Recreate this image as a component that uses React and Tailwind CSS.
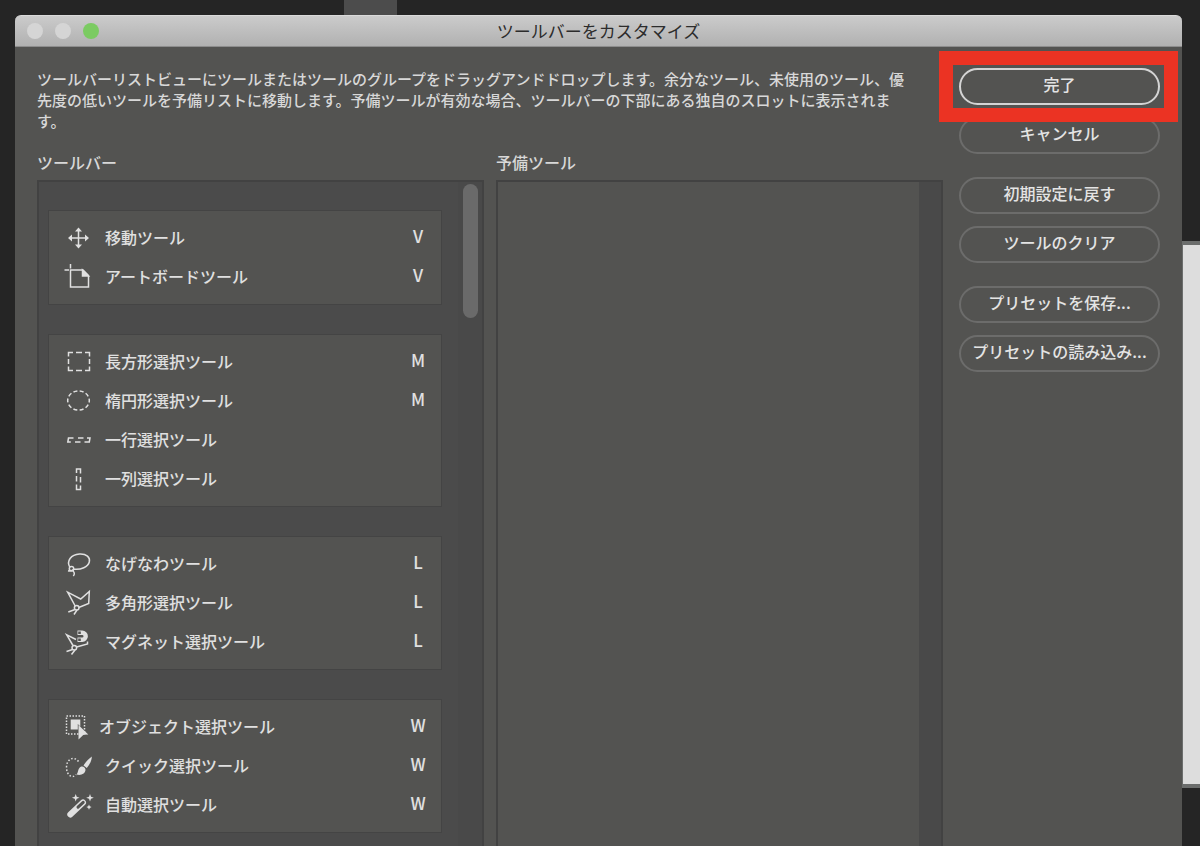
const MoveIcon = () => (
  <g>
    <path d="M13.5 8v16M5.5 16h16" />
    <path
      d="M13.5 5.5l3.5 4h-7zM13.5 26.5l3.5-4h-7zM3 16l4-3.5v7zM24 16l-4-3.5v7z"
      fill="currentColor"
      stroke="none"
    />
  </g>
);

const ArtboardIcon = () => (
  <g>
    <path d="M5.5 3v4.5M-0.5 9H4M5.5 9h12.5l5.5 5.5V26h-18z" />
    <path d="M17.5 9v6h6z" fill="currentColor" />
  </g>
);

const RectMarqueeIcon = () => (
  <path d="M3.5 10.5V6.5H8M11 6.5h6M20 6.5h4.5v4M24.5 13v5M24.5 20.5v4H20M17 24.5h-6M8 24.5H3.5v-4M3.5 18v-5" />
);

const EllipseMarqueeIcon = () => (
  <ellipse cx="13.5" cy="15.5" rx="10.8" ry="9.6" pathLength="120" strokeDasharray="7.5 4.5" strokeDashoffset="3.7" />
);

const RowMarqueeIcon = () => (
  <path d="M8.5 14H3.5L2.8 18h3M13 14h5.5M10 18h5.5M22 14h3L24.3 18H19.5" />
);

const ColumnMarqueeIcon = () => (
  <path d="M11.5 10V6h4V10.5M11.5 13v5.5M15.5 14v5.5M11.5 21.5v5h4v-4" />
);

const LassoIcon = () => (
  <g>
    <path d="M5 19.5C1 13 6 6.5 14.5 6c7-.4 11 3.5 9.8 8-1.3 5-8.3 8-15.3 7.2" />
    <circle cx="6.5" cy="20.8" r="2.2" />
    <path d="M3 22.8c2.5.6 4-.3 5.5-1.3M7.5 22.5c2 1.5 2.5 3.5.8 5.5" />
  </g>
);

const PolygonLassoIcon = () => (
  <g>
    <path d="M10.2 19L2.7 5.2l13 6.8 8.6-7.5-.6 12-10 4M10 22.5l-6.7 2.5M12 23l-3 4.5" />
    <circle cx="11.7" cy="20.8" r="2.3" />
  </g>
);

const MagneticLassoIcon = () => (
  <g>
    <path d="M8 19.5L1.7 8.8l9.3 4.7M11.5 21l11-3v-2.5M7.5 23.5l-6 2M10 24l-3.5 4.5" />
    <circle cx="9.3" cy="21.8" r="2.3" />
    <path d="M12.5 6.8h4.7a3.5 3.5 0 0 1 0 7h-4.7" strokeWidth="4.4" />
    <path d="M13.2 6.8h2.6M13.2 13.8h2.6" stroke="#535351" strokeWidth="2.4" />
  </g>
);

const ObjectSelectIcon = () => (
  <g>
    <rect x="1.5" y="5" width="18" height="18" strokeDasharray="1.5 1.5" />
    <path d="M5.7 8.5h9.6v7l-2.5-2.5v5.5H5.7z" fill="currentColor" stroke="none" />
    <path d="M13.5 14l9.8 9.5-4.8.2-5 4.8z" fill="currentColor" stroke="none" />
  </g>
);

const QuickSelectIcon = () => (
  <g>
    <path d="M13.5 11.5C9 5.5 1.5 9 1.5 17.2S7.5 29 11 24.5" strokeDasharray="1.5 1.9" />
    <path
      d="M11.5 24.5c1.8-1.5 1.2-6 4.3-7.8 2-1 4.7.6 4.7 3 0 3.8-4.5 6.2-9 4.8zM18.5 15.5c2-3.5 5-6.5 8.3-9 0 4-2 8-5 11.5z"
      fill="currentColor"
      stroke="none"
    />
  </g>
);

const WandIcon = () => (
  <g>
    <path d="M5.3 25.5L18 13.5" strokeWidth="6" strokeLinecap="round" />
    <path d="M13 18.2l5.2-4.9" stroke="#535351" strokeWidth="3" strokeLinecap="round" />
    <path
      d="M10.7 5l1 2.8 2.8 1-2.8 1-1 2.8-1-2.8-2.8-1 2.8-1zM25 5l1 2.8 2.8 1-2.8 1-1 2.8-1-2.8-2.8-1 2.8-1zM24 15.5l.8 1.8 1.8.8-1.8.8-.8 1.8-.8-1.8-1.8-.8 1.8-.8z"
      fill="currentColor"
      stroke="none"
    />
  </g>
);

const groups = [
  [
    { name: "移動ツール", shortcut: "V", icon: MoveIcon },
    { name: "アートボードツール", shortcut: "V", icon: ArtboardIcon },
  ],
  [
    { name: "長方形選択ツール", shortcut: "M", icon: RectMarqueeIcon },
    { name: "楕円形選択ツール", shortcut: "M", icon: EllipseMarqueeIcon },
    { name: "一行選択ツール", icon: RowMarqueeIcon },
    { name: "一列選択ツール", icon: ColumnMarqueeIcon },
  ],
  [
    { name: "なげなわツール", shortcut: "L", icon: LassoIcon },
    { name: "多角形選択ツール", shortcut: "L", icon: PolygonLassoIcon },
    { name: "マグネット選択ツール", shortcut: "L", icon: MagneticLassoIcon },
  ],
  [
    { name: "オブジェクト選択ツール", shortcut: "W", icon: ObjectSelectIcon, narrow: true },
    { name: "クイック選択ツール", shortcut: "W", icon: QuickSelectIcon },
    { name: "自動選択ツール", shortcut: "W", icon: WandIcon },
  ],
];

const ToolRow = ({ tool }) => {
  const Icon = tool.icon;
  return (
    <li className="flex h-[39px] items-center pl-4 text-[#e0e0e0]">
      <svg
        viewBox="0 0 30 30"
        fill="none"
        stroke="currentColor"
        strokeWidth="1.5"
        aria-hidden="true"
        className={`h-[30px] w-[30px] shrink-0 overflow-visible ${tool.narrow ? "mr-1" : "mr-2.5"}`}
      >
        <Icon />
      </svg>
      <span className="flex-1 whitespace-nowrap">{tool.name}</span>
      {tool.shortcut && (
        <kbd className="w-[46px] pb-0.5 text-center font-[inherit] text-[17px]">{tool.shortcut}</kbd>
      )}
    </li>
  );
};

const PillButton = ({ children, primary }) => (
  <button
    type="button"
    className={`h-[37px] w-full rounded-full border-2 pb-1.5 whitespace-nowrap text-[#e4e4e4] ${
      primary ? "border-[#d4d4d4]" : "border-[#6c6c6b]"
    }`}
  >
    {children}
  </button>
);

const TitleBar = () => (
  <header className="grid h-8 shrink-0 grid-cols-[1fr_auto_1fr] items-center rounded-t-md border-t border-b border-t-[#dadada] border-b-[#8d8d8d] bg-linear-to-b from-[#cbcbcb] to-[#b1b1b1] px-3">
    <div className="flex gap-3">
      <button type="button" aria-label="閉じる" className="size-4 rounded-full bg-[#d5d5d5]" />
      <button type="button" aria-label="しまう" className="size-4 rounded-full bg-[#d5d5d5]" />
      <button type="button" aria-label="拡大" className="size-4 rounded-full bg-[#7bcb62]" />
    </div>
    <h1 className="text-[17px] font-normal text-[#2c2c2c]">ツールバーをカスタマイズ</h1>
  </header>
);

const ToolbarList = () => (
  <section className="flex min-h-0 min-w-0 flex-1 flex-col">
    <h2 className="mb-1.5 leading-6">ツールバー</h2>
    <div className="flex min-h-0 flex-1 justify-between overflow-hidden border-2 border-b-0 border-[#424242] bg-[#4b4b4b] pl-[9px]">
      <ul className="flex flex-1 flex-col gap-[29px] pt-7">
        {groups.map((group, idx) => (
          <li key={idx}>
            <ul className="border border-[#444444] bg-[#535351] pt-1.5 pb-[9px]">
              {group.map((tool) => (
                <ToolRow key={tool.name} tool={tool} />
              ))}
            </ul>
          </li>
        ))}
      </ul>
      <div className="ml-4 w-6 bg-[#494949] pt-0.5 pl-[5px]">
        <div className="h-[134px] w-[15px] rounded-full bg-[#6a6a6a]" />
      </div>
    </div>
  </section>
);

const ExtraToolsList = () => (
  <section className="flex min-h-0 min-w-0 flex-1 flex-col">
    <h2 className="mb-1.5 leading-6">予備ツール</h2>
    <div className="flex flex-1 justify-end border-2 border-b-0 border-[#424242]">
      <div className="w-[22px] bg-[#494949]" />
    </div>
  </section>
);

const Dialog = () => (
  <main className="flex min-w-0 flex-1 flex-col overflow-hidden">
    <TitleBar />
    <div className="flex min-h-0 flex-1 gap-4 bg-[#535351] pt-[21px] pr-[22px] pl-[22px] text-[#d8d8d8]">
      <div className="flex min-w-0 flex-1 flex-col">
        <p className="mb-[19px] pr-7 text-[15px] leading-[21px]">
          ツールバーリストビューにツールまたはツールのグループをドラッグアンドドロップします。余分なツール、未使用のツール、優先度の低いツールを予備リストに移動します。予備ツールが有効な場合、ツールバーの下部にある独自のスロットに表示されます。
        </p>
        <div className="flex min-h-0 flex-1 gap-3">
          <ToolbarList />
          <ExtraToolsList />
        </div>
      </div>
      <div className="flex w-[201px] shrink-0 flex-col gap-[23px]">
        <div className="flex flex-col gap-3">
          <div className="relative">
            <PillButton primary>完了</PillButton>
            <div className="pointer-events-none absolute -top-[17px] -right-[18px] -bottom-[17px] -left-5 border-14 border-[#eb3323]" />
          </div>
          <PillButton>キャンセル</PillButton>
        </div>
        <div className="flex flex-col gap-3">
          <PillButton>初期設定に戻す</PillButton>
          <PillButton>ツールのクリア</PillButton>
        </div>
        <div className="flex flex-col gap-3">
          <PillButton>プリセットを保存...</PillButton>
          <PillButton>プリセットの読み込み...</PillButton>
        </div>
      </div>
    </div>
  </main>
);

export default function App() {
  return (
    <div className="flex h-screen flex-col overflow-hidden bg-[#252525] font-['Noto_Sans_CJK_JP',sans-serif] text-base leading-6 font-medium">
      <div className="flex h-[15px] shrink-0 pl-[344px]">
        <div className="w-[53px] bg-[#4c4c4c]" />
      </div>
      <div className="flex min-h-0 flex-1 pl-[15px]">
        <Dialog />
        {/* canvas of the document behind the dialog */}
        <div className="flex w-[18px] shrink-0 flex-col pt-[226px] pb-[58px]">
          <div className="flex-1 border-y-4 border-l border-[#6b6d6c] bg-[#dddddd]" />
        </div>
      </div>
    </div>
  );
}
